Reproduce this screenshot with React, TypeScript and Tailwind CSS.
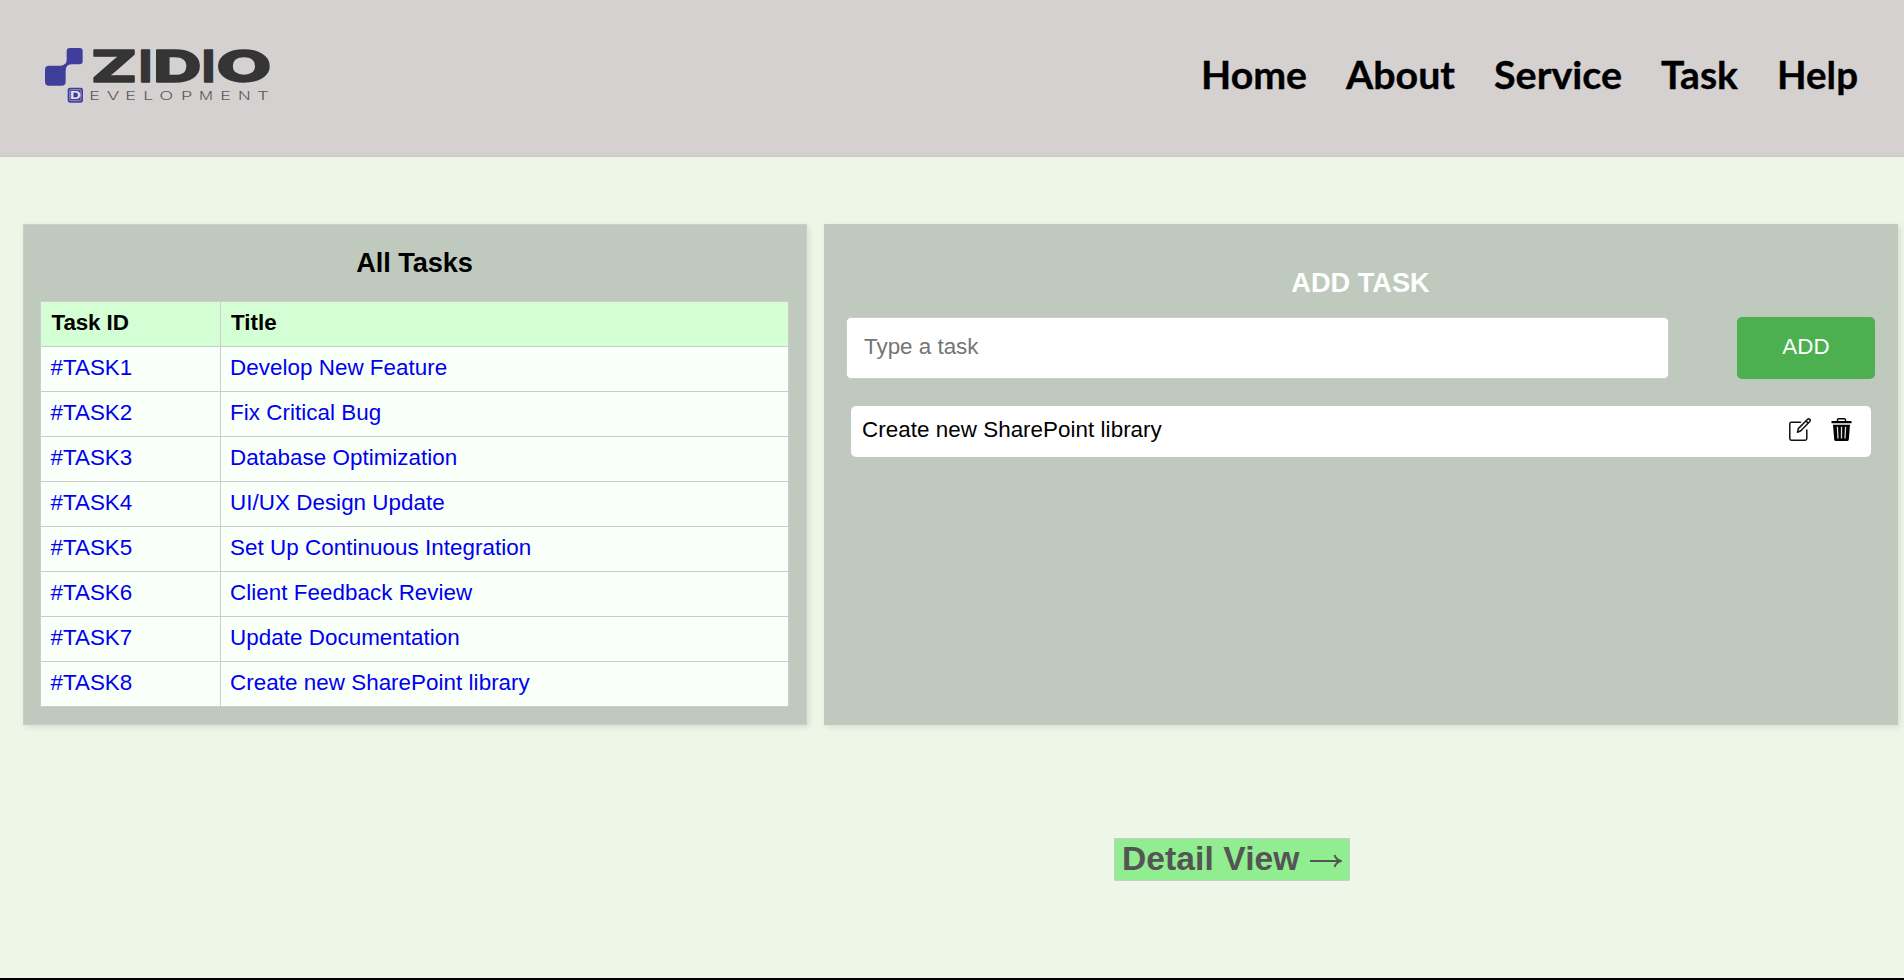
import React from "react";

const tasks = [
  "Develop New Feature",
  "Fix Critical Bug",
  "Database Optimization",
  "UI/UX Design Update",
  "Set Up Continuous Integration",
  "Client Feedback Review",
  "Update Documentation",
  "Create new SharePoint library",
];

const links = [
  { name: "Home", width: 106 },
  { name: "About", width: 109 },
  { name: "Service", width: 128 },
  { name: "Task", width: 77 },
  { name: "Help", width: 81 },
];

const wordmark = [
  { char: "Z", x: 182, width: 140 },
  { char: "I", x: 327, width: 39 },
  { char: "D", x: 370, width: 145 },
  { char: "I", x: 516, width: 39 },
  { char: "O", x: 559, width: 166 },
];

function Logo() {
  return (
    <svg className="h-[90px] w-[260px]" viewBox="0 0 780 270" aria-label="Zidio Development">
      <g fill="#3f3f9b">
        <rect x="110" y="54" width="48" height="49" rx="9" />
        <rect x="45" y="107" width="62" height="60" rx="12" />
        <path d="M92 108 Q110 104 111 90 L126 102 Q108 103 106 122Z" />
        <rect x="113" y="173" width="46" height="45" rx="7" />
      </g>
      <rect x="119" y="179" width="34" height="33" rx="3" fill="none" stroke="#b9b6cf" strokeWidth="2" />
      <text x="120" y="208" fontFamily="Inter, sans-serif" fontWeight="700" fontSize="33" fill="#e4e0e8" textLength="33" lengthAdjust="spacingAndGlyphs">D</text>
      <g fontFamily="Inter, sans-serif" fontWeight="800" fontSize="132" fill="#353535" stroke="#353535" strokeWidth="4" strokeLinejoin="round">
        {wordmark.map((l) => (
          <text key={l.x} x={l.x} y="155" textLength={l.width} lengthAdjust="spacingAndGlyphs">{l.char}</text>
        ))}
      </g>
      <g fontFamily="Inter, sans-serif" fontWeight="300" fontSize="36" fill="#5c5a5a">
        {"EVELOPMENT".split("").map((c, i) => (
          <text key={i} x={[178, 230, 286, 340, 388, 453, 507, 571, 624, 681][i]} y="209" textLength={[32, 38, 32, 30, 42, 34, 42, 32, 38, 36][i]} lengthAdjust="spacingAndGlyphs">{c}</text>
        ))}
      </g>
    </svg>
  );
}

export default function App() {
  return (
    <div className="flex h-[980px] flex-col overflow-hidden border-b-2 border-black bg-[#eef6e7] font-['Liberation_Sans',Arial,sans-serif] text-[22.4px] leading-[28px] text-black">
      <header className="flex h-[157px] shrink-0 items-start justify-between border-b-2 border-[#cccacb] bg-[#d5d1d0] pt-[30px] pr-[46px] pl-[30px]">
        <Logo />
        <nav className="flex gap-[39px] pt-[20px] font-['Lato',sans-serif] text-[38px] leading-[50px] font-bold">
          {links.map((l) => (
            <svg key={l.name} width={l.width} height="50" className="overflow-visible" stroke="#000" strokeWidth="0.35">
              <text x="0" y="39.3" textLength={l.width} lengthAdjust="spacingAndGlyphs">{l.name}</text>
            </svg>
          ))}
        </nav>
      </header>

      <main className="mt-[67px] flex h-[501px] shrink-0 gap-[17px] pr-[6px] pl-[23px]">
        <section className="w-[784px] border border-[#cccccc] bg-[#c0c9be] pr-[17px] pl-[16px] shadow-[2px_2px_6px_rgba(0,0,0,0.1)]">
          <h2 className="h-[76px] pt-[22px] text-center text-[27.2px] leading-[31px] font-bold tracking-[-0.1px]">All Tasks</h2>
          <table className="w-full border-collapse">
            <thead>
              <tr className="h-[45px] bg-[#d4ffd4] text-left">
                <th className="w-[180px] border border-[#cccccc] px-[10.5px] pt-0 pb-[2px] tracking-[-0.1px]">Task ID</th>
                <th className="border border-[#cccccc] px-[10px] pt-0 pb-[2px]">Title</th>
              </tr>
            </thead>
            <tbody>
              {tasks.map((title, i) => (
                <tr key={title} className="h-[45px] bg-[#f9fff9] text-[#0000ee]">
                  <td className="border border-[#cccccc] px-[9.5px] pt-0 pb-[2px]">#TASK{i + 1}</td>
                  <td className="border border-[#cccccc] px-[9px] pt-0 pb-[2px] tracking-[0.04px]">{title}</td>
                </tr>
              ))}
            </tbody>
          </table>
        </section>

        <section className="w-[1074px] bg-[#c0c9be] pr-[23px] pl-[22px] shadow-[2px_2px_6px_rgba(0,0,0,0.1)]">
          <h2 className="h-[93px] pt-[43px] text-center text-[27.2px] leading-[32px] font-bold text-white">ADD TASK</h2>
          <div className="flex justify-between">
            <input
              className="h-[62px] w-[823px] rounded-[5px] border border-[#cccccc] bg-white px-[17px] pb-[2px] placeholder:text-[#757575] placeholder:opacity-100"
              placeholder="Type a task"
            />
            <button className="h-[62px] w-[138px] rounded-[5px] bg-[#4caf50] pb-[2px] text-white">ADD</button>
          </div>
          <div className="mt-[27px] mr-[4px] ml-[5px] flex h-[51px] items-center rounded-[5px] bg-white pr-[19px] pb-[3px] pl-[11px]">
            <span className="grow tracking-[0.04px]">Create new SharePoint library</span>
            <svg className="mr-[20px] mb-[1px] h-[23px] w-[22px]" viewBox="0 0 22 23" fill="none" stroke="#111" strokeWidth="1.5" strokeLinejoin="round" strokeLinecap="round">
              <path d="M11.5 4.2H2.4Q.8 4.2.8 5.8V20.6Q.8 22.2 2.4 22.2H16.2Q17.8 22.2 17.8 20.6V12" />
              <path d="M8.5 14.2 9.3 10.6 18.6 1.3Q19.6.4 20.7 1.3T20.8 3.4L11.8 12.7Z M17 3 19.2 5.1" />
            </svg>
            <svg className="mb-[1px] h-[23px] w-[21px]" viewBox="0 0 21 23">
              <path d="M6.5 3V1.8Q6.5.8 7.5.8H13.5Q14.5.8 14.5 1.8V3" fill="none" stroke="#000" strokeWidth="1.4" />
              <path d="M.5 3H20.5V5.3H.5Z M2 6.8H19L17.8 21.5Q17.6 23 16 23H5Q3.4 23 3.2 21.5Z" />
              <path d="M6.4 8.8 7 20.5M10.5 8.8V20.5M14.6 8.8 14 20.5" stroke="#ddd" strokeWidth="1.3" />
            </svg>
          </div>
        </section>
      </main>

      <div className="mt-[113px] ml-[1114px] flex h-[43px] w-[236px] shrink-0 items-center border border-[#cccccc] bg-[#90ee90] pb-[2px] pl-[7px] text-[33.6px] leading-[40px] font-bold text-[#555555]">
        <span className="w-[188px] whitespace-pre tracking-[0.08px]">Detail View </span>
        <svg className="mt-[5px] h-[14px] w-[32px]" viewBox="0 0 32 14" fill="none" stroke="#555555" strokeWidth="1.9" strokeLinejoin="round">
          <path d="M0 7H30M24.5 1Q26 5.5 31 7Q26 8.5 24.5 13" />
        </svg>
      </div>
    </div>
  );
}
